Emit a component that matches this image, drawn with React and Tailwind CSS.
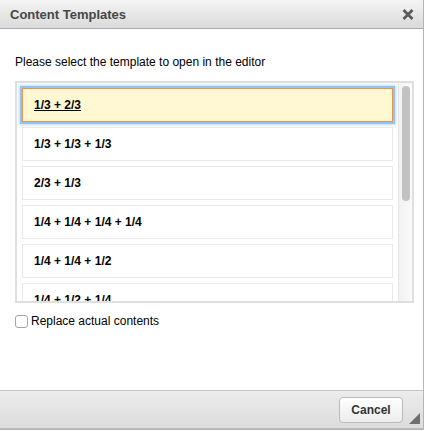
import React from "react";

const items = [
  "1/3 + 2/3",
  "1/3 + 1/3 + 1/3",
  "2/3 + 1/3",
  "1/4 + 1/4 + 1/4 + 1/4",
  "1/4 + 1/4 + 1/2",
  "1/4 + 1/2 + 1/4",
];

export default function App() {
  return (
    <div className="w-[426px] h-[431px] bg-white font-['Liberation_Sans',Arial,sans-serif]">
      <div className="relative w-[424px] h-[430px] border-r border-b border-[#b5b5b5] flex flex-col bg-white">
        {/* header */}
        <div className="h-[29px] shrink-0 flex items-center justify-between pl-[10px] pr-[9px] bg-gradient-to-b from-[#f4f4f4] to-[#dadada] border-b border-[#a9a9a9]">
          <span className="text-[13px] font-bold text-[#464646] leading-none">Content Templates</span>
          <svg width="12" height="11" viewBox="0 0 12 11" className="mt-[1px]">
            <path d="M1.5 1 L10.5 10 M10.5 1 L1.5 10" stroke="#5a5a5a" strokeWidth="2.8" strokeLinecap="butt" />
          </svg>
        </div>
        {/* body */}
        <div className="flex-1 px-[15px] pt-[26px]">
          <p className="text-[12px] leading-[14px] text-black">Please select the template to open in the editor</p>
          <div className="mt-[12px] w-[399px] h-[222px] border-2 border-[#dfdfdf] flex overflow-hidden">
            <div className="flex-1 flex flex-col gap-[5px] pt-[5px] px-[5px]">
              {items.map((t, i) =>
                i === 0 ? (
                  <div
                    key={t}
                    className="h-[34px] shrink-0 flex items-center pl-[11px] bg-[#fff8d3] border border-[#e6954a] shadow-[0_0_0_2px_#93c3f4,0_0_3px_3px_#bcdcfb]"
                  >
                    <span className="text-[12px] font-bold underline text-black">{t}</span>
                  </div>
                ) : (
                  <div
                    key={t}
                    className="h-[34px] shrink-0 flex items-center pl-[11px] bg-white border border-[#e9e9e9]"
                  >
                    <span className="text-[12px] font-bold text-black">{t}</span>
                  </div>
                )
              )}
            </div>
            <div className="w-[14px] shrink-0 bg-gradient-to-r from-[#f2f2f2] to-[#fafafa] border-l border-[#e6e6e6] flex justify-center pt-[3px]">
              <div className="w-[8px] h-[115px] rounded-full bg-[#c2c2c2]"></div>
            </div>
          </div>
          <label className="mt-[11px] flex items-center gap-[3px]">
            <span className="w-[13px] h-[13px] rounded-[3px] border border-[#a5a5a5] bg-white inline-block"></span>
            <span className="text-[12px] text-black leading-[14px]">Replace actual contents</span>
          </label>
        </div>
        {/* footer */}
        <div className="h-[39px] shrink-0 border-t border-[#c4c4c4] border-b border-b-[#bdbdbd] bg-gradient-to-b from-[#ececec] to-[#dcdcdc] flex items-center justify-end pr-[20px]">
          <button className="w-[64px] h-[26px] rounded-[4px] border border-[#b9b9b9] bg-gradient-to-b from-white to-[#ececec] text-[12px] font-bold text-[#333]">
            Cancel
          </button>
        </div>
        <svg width="11" height="11" viewBox="0 0 11 11" className="absolute right-[3px] bottom-[5px]">
          <polygon points="11,0 11,11 0,11" fill="#707070" />
        </svg>
      </div>
    </div>
  );
}
